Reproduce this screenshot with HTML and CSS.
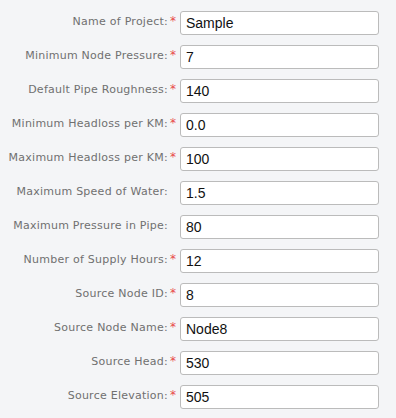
FILE: index.html
```html
<!DOCTYPE html>
<html lang="en">
<head>
    <meta charset="UTF-8">
    <meta name="viewport" content="width=device-width, initial-scale=1.0">
    <title>Project Settings</title>
    <link rel="stylesheet" href="styles.css">
</head>
<body>
    <form class="settings">
        <div class="row">
            <label class="label">Name of Project:</label>
            <span class="req">*</span>
            <input class="field" type="text" value="Sample">
        </div>
        <div class="row">
            <label class="label">Minimum Node Pressure:</label>
            <span class="req">*</span>
            <input class="field" type="text" value="7">
        </div>
        <div class="row">
            <label class="label">Default Pipe Roughness:</label>
            <span class="req">*</span>
            <input class="field" type="text" value="140">
        </div>
        <div class="row">
            <label class="label">Minimum Headloss per KM:</label>
            <span class="req">*</span>
            <input class="field" type="text" value="0.0">
        </div>
        <div class="row">
            <label class="label">Maximum Headloss per KM:</label>
            <span class="req">*</span>
            <input class="field" type="text" value="100">
        </div>
        <div class="row">
            <label class="label">Maximum Speed of Water:</label>
            <span class="req"></span>
            <input class="field" type="text" value="1.5">
        </div>
        <div class="row">
            <label class="label">Maximum Pressure in Pipe:</label>
            <span class="req"></span>
            <input class="field" type="text" value="80">
        </div>
        <div class="row">
            <label class="label">Number of Supply Hours:</label>
            <span class="req">*</span>
            <input class="field" type="text" value="12">
        </div>
        <div class="row">
            <label class="label">Source Node ID:</label>
            <span class="req">*</span>
            <input class="field" type="text" value="8">
        </div>
        <div class="row">
            <label class="label">Source Node Name:</label>
            <span class="req">*</span>
            <input class="field" type="text" value="Node8">
        </div>
        <div class="row">
            <label class="label">Source Head:</label>
            <span class="req">*</span>
            <input class="field" type="text" value="530">
        </div>
        <div class="row">
            <label class="label">Source Elevation:</label>
            <span class="req">*</span>
            <input class="field" type="text" value="505">
        </div>
    </form>
</body>
</html>
```

FILE: styles.css
```css
body {
    margin: 0;
    background-color: #f4f5f7;
    font-family: "DejaVu Sans", Verdana, sans-serif;
}
.settings {
    display: flex;
    flex-direction: column;
    gap: 10px;
    padding-top: 11px;
}
.row {
    display: flex;
    align-items: center;
    height: 24px;
}
.label {
    width: 168px;
    text-align: right;
    font-size: 11px;
    letter-spacing: 0.25px;
    color: #707070;
    margin-top: -3px;
}
.req {
    width: 10px;
    padding-left: 2px;
    color: #e84a4a;
    font-size: 12px;
    margin-top: -4px;
}
.field {
    box-sizing: border-box;
    width: 199px;
    height: 24px;
    margin: 0;
    padding: 0 5px;
    border: 1px solid #bbb;
    border-radius: 3px;
    background: #fff;
    font-family: "Liberation Sans", Arial, sans-serif;
    font-size: 14px;
    color: #111;
}
```
